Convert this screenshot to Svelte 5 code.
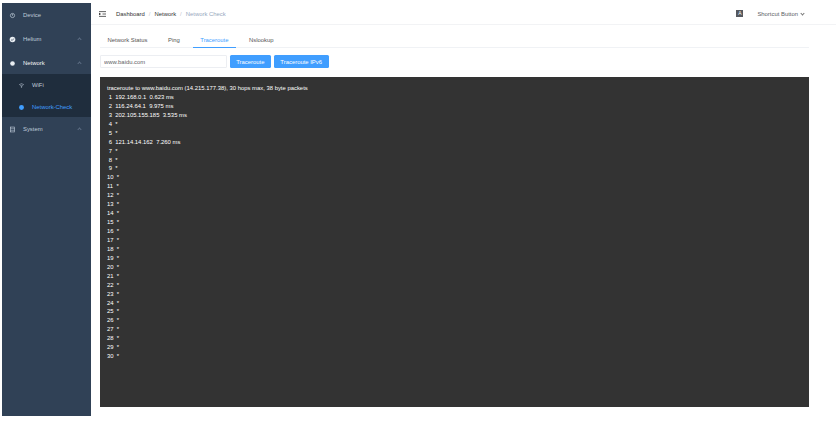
<script>
  const tabs = ['Network Status', 'Ping', 'Traceroute', 'Nslookup'];
  const known = {
    1: '192.168.0.1  0.623 ms',
    2: '116.24.64.1  9.975 ms',
    3: '202.105.155.185  3.535 ms',
    6: '121.14.14.162  7.260 ms'
  };
  const hops = Array.from({ length: 30 }, (_, i) => {
    const n = i + 1;
    return `${n < 10 ? ' ' : ''}${n}  ${known[n] ?? '*'}`;
  });
</script>

<div class="page">
  <aside class="sidebar">
    <div class="item">
      <svg class="ico" viewBox="0 0 10 10"><circle cx="5" cy="5" r="3" fill="none" stroke="currentColor" stroke-width="1"/><path d="M5 3v2.4" stroke="currentColor"/></svg>
      <span>Device</span>
    </div>
    <div class="item">
      <svg class="ico bright" viewBox="0 0 10 10"><circle cx="5" cy="5" r="4" fill="currentColor"/><path d="M3 5.2l1.5 1.3L7 3.6" fill="none" stroke="#304156" stroke-width="1"/></svg>
      <span>Helium</span>
      <i class="chev"></i>
    </div>
    <div class="item open">
      <svg class="ico bright" viewBox="0 0 10 10"><circle cx="5" cy="5" r="3.3" fill="currentColor"/></svg>
      <span>Network</span>
      <i class="chev"></i>
    </div>
    <div class="submenu">
      <div class="subitem">
        <svg class="ico" viewBox="0 0 10 10"><path d="M1.5 4a5 5 0 0 1 7 0M3 5.5a3 3 0 0 1 4 0" fill="none" stroke="currentColor" stroke-width=".8"/><circle cx="5" cy="7" r=".9" fill="currentColor"/></svg>
        <span>WiFi</span>
      </div>
      <div class="subitem active">
        <svg class="ico" viewBox="0 0 10 10"><circle cx="5" cy="5" r="3.5" fill="currentColor"/></svg>
        <span>Network-Check</span>
      </div>
    </div>
    <div class="item">
      <svg class="ico" viewBox="0 0 10 10"><rect x="2" y="1.5" width="6" height="7" fill="none" stroke="currentColor" stroke-width=".9"/><path d="M2 3.8h6M2 6.2h6" stroke="currentColor" stroke-width=".7"/></svg>
      <span>System</span>
      <i class="chev"></i>
    </div>
  </aside>

  <main class="main">
    <header class="navbar">
      <svg class="fold" viewBox="0 0 10 8"><path d="M0 .6h10M5 4h5M0 7.4h10" stroke="#333" stroke-width="1.1"/><path d="M0 2.3v3.4L3 4z" fill="#333"/></svg>
      <nav class="crumbs">
        <span>Dashboard</span><em>/</em><span>Network</span><em>/</em><span class="last">Network Check</span>
      </nav>
      <div class="right">
        <span class="lang">A</span>
        <span class="shortcut">Shortcut Button</span>
        <i class="chev small"></i>
      </div>
    </header>

    <section class="content">
      <div class="tabs">
        {#each tabs as tab}
          <div class="tab" class:active={tab === 'Traceroute'}>{tab}</div>
        {/each}
      </div>

      <div class="form">
        <input class="host" value="www.baidu.com" readonly />
        <button class="btn">Traceroute</button>
        <button class="btn">Traceroute IPv6</button>
      </div>

      <div class="terminal">
        <div>traceroute to www.baidu.com (14.215.177.38), 30 hops max, 38 byte packets</div>
        {#each hops as hop}
          <div class="line">{hop}</div>
        {/each}
      </div>
    </section>
  </main>
</div>

<style>
  :global(body) {
    background: #fff;
    font-family: "Liberation Sans", Arial, sans-serif;
  }

  .page {
    display: flex;
    height: 423px;
    padding: 3px 0 7px 2px;
    box-sizing: border-box;
    overflow: hidden;
    font-size: 5.9px;
  }

  .sidebar {
    width: 89px;
    flex: none;
    background: #304156;
    color: #bfcbd9;
  }

  .item {
    display: flex;
    align-items: center;
    height: 24px;
    padding-left: 7px;
  }

  .item.open {
    color: #f4f4f5;
  }

  .ico {
    width: 7px;
    height: 7px;
    flex: none;
    margin-right: 7px;
  }

  .ico.bright {
    color: #e8edf2;
  }

  .chev {
    width: 2px;
    height: 2px;
    margin-left: auto;
    margin-right: 10px;
    border-right: 0.5px solid #5d6e84;
    border-top: 0.5px solid #5d6e84;
    transform: rotate(-45deg);
  }

  .chev.small {
    margin: 0 0 1px 3px;
    border-color: #777;
    transform: rotate(135deg);
  }

  .submenu {
    background: #1f2d3d;
    height: 43px;
    margin-top: -1px;
  }

  .subitem {
    display: flex;
    align-items: center;
    height: 22px;
    padding-left: 16px;
  }

  .subitem.active {
    color: #409eff;
  }

  .main {
    flex: 1;
    min-width: 0;
    display: flex;
    flex-direction: column;
  }

  .navbar {
    display: flex;
    align-items: center;
    height: 21px;
    padding: 0 32px 0 8px;
    border-bottom: 1px solid #f2f3f5;
  }

  .fold {
    width: 7px;
    height: 6px;
    margin-right: 10px;
  }

  .crumbs {
    display: flex;
    gap: 4px;
    color: #303133;
  }

  .crumbs em {
    font-style: normal;
    color: #c0c4cc;
  }

  .crumbs .last {
    color: #97a8be;
  }

  .right {
    margin-left: auto;
    display: flex;
    align-items: center;
    color: #5a5e66;
  }

  .lang {
    width: 7px;
    height: 7px;
    background: #55585e;
    color: #fff;
    font-size: 5px;
    line-height: 7px;
    text-align: center;
    margin-right: 14px;
  }

  .content {
    flex: 1;
    min-height: 0;
    display: flex;
    flex-direction: column;
    padding: 7px 27px 9px 9px;
  }

  .tabs {
    display: flex;
    height: 16px;
    box-sizing: border-box;
    border-bottom: 1px solid #f0f2f5;
    color: #555;
  }

  .tab {
    height: 16px;
    line-height: 17px;
    padding: 0 7.5px;
    margin-right: 5.5px;
    box-sizing: border-box;
  }

  .tab.active {
    color: #409eff;
    border-bottom: 1px solid #409eff;
  }

  .form {
    display: flex;
    align-items: stretch;
    gap: 2.5px;
    height: 13px;
    margin-top: 7px;
  }

  .host {
    width: 127px;
    padding: 0 3px;
    box-sizing: border-box;
    border: 1px solid #eceef2;
    border-radius: 1px;
    font: 5.9px "Liberation Sans", Arial, sans-serif;
    color: #606266;
    outline: none;
  }

  .btn {
    border: none;
    border-radius: 1.5px;
    padding: 0 6.7px;
    background: #409eff;
    color: #fff;
    font: 5.9px "Liberation Sans", Arial, sans-serif;
  }

  .terminal {
    flex: 1;
    margin-top: 9px;
    padding: 7px;
    background: #333;
    color: #fff;
    line-height: 8.93px;
    overflow: hidden;
  }

  .line {
    white-space: pre;
  }
</style>
